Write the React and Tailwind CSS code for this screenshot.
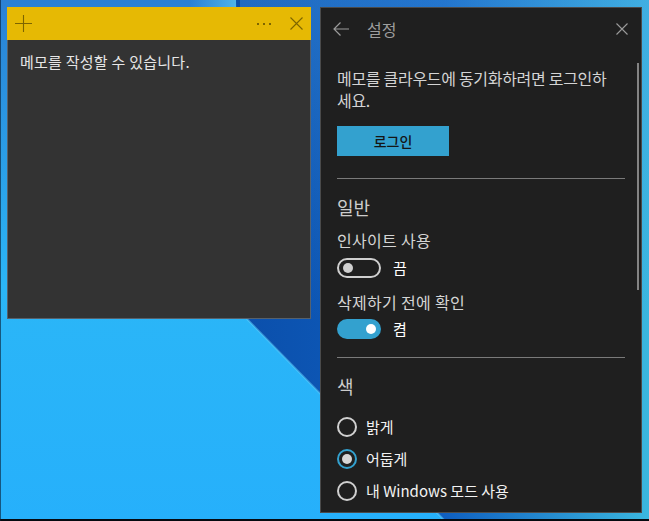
import React from "react";

function Wallpaper() {
  return (
    <svg className="absolute inset-0" width="649" height="521" viewBox="0 0 649 521">
      <defs>
        <linearGradient id="rightG" x1="240" y1="0" x2="649" y2="0" gradientUnits="userSpaceOnUse">
          <stop offset="0" stopColor="#0b4fab" />
          <stop offset="0.5" stopColor="#0f5fc0" />
          <stop offset="1" stopColor="#3bb7df" />
        </linearGradient>
        <linearGradient id="topHi" x1="0" y1="0" x2="0" y2="320" gradientUnits="userSpaceOnUse">
          <stop offset="0" stopColor="#4aa0e8" stopOpacity="0.35" />
          <stop offset="1" stopColor="#4aa0e8" stopOpacity="0" />
        </linearGradient>
        <linearGradient id="leftG" x1="0" y1="0" x2="0" y2="521" gradientUnits="userSpaceOnUse">
          <stop offset="0" stopColor="#2a80d4" />
          <stop offset="0.55" stopColor="#2bb6f7" />
          <stop offset="1" stopColor="#26b0fb" />
        </linearGradient>
        <linearGradient id="ray" x1="190" y1="0" x2="236" y2="0" gradientUnits="userSpaceOnUse">
          <stop offset="0" stopColor="#52b8ea" stopOpacity="0" />
          <stop offset="1" stopColor="#52b8ea" stopOpacity="0.9" />
        </linearGradient>
      </defs>
      <rect width="649" height="521" fill="url(#rightG)" />
      <rect x="240" width="409" height="521" fill="url(#topHi)" />
      <polygon points="0,0 236,0 247,319 445,521 0,521" fill="url(#leftG)" />
      <rect x="180" y="0" width="56" height="8" fill="url(#ray)" />
      <line x1="247" y1="319" x2="449" y2="525" stroke="#6ad8ff" strokeWidth="2" opacity="0.45" />
      <rect x="0" y="519" width="649" height="2" fill="#050a10" />
      <rect x="0" y="0" width="1" height="521" fill="#0a1a2e" opacity="0.6" />
    </svg>
  );
}

function Toggle({ on }) {
  if (on) {
    return (
      <div className="w-[44px] h-[20px] rounded-full bg-[#33a1cf] flex items-center justify-end pr-[5px]">
        <div className="w-[10px] h-[10px] rounded-full bg-white" />
      </div>
    );
  }
  return (
    <div className="w-[44px] h-[20px] rounded-full border-2 border-[#cfcfcf] flex items-center pl-[4px]">
      <div className="w-[10px] h-[10px] rounded-full bg-[#cfcfcf]" />
    </div>
  );
}

function Radio({ checked, label }) {
  return (
    <div className="flex items-center h-[20px]">
      {checked ? (
        <div className="w-[20px] h-[20px] rounded-full border-2 border-[#33a1cf] flex items-center justify-center">
          <div className="w-[10px] h-[10px] rounded-full bg-[#d6d6d6]" />
        </div>
      ) : (
        <div className="w-[20px] h-[20px] rounded-full border-2 border-[#d0d0d0]" />
      )}
      <span className="ml-[9px] text-[15px] leading-[20px] text-[#f2f2f2] whitespace-nowrap">{label}</span>
    </div>
  );
}

export default function App() {
  return (
    <div className="relative w-[649px] h-[521px] overflow-hidden font-['Noto_Sans_CJK_KR','Noto_Sans',sans-serif]">
      <Wallpaper />
      <div className="relative flex items-start gap-[9px] pl-[7px] pt-[7px]">
        {/* Sticky note */}
        <div className="w-[304px] h-[312px] flex flex-col">
          <div className="h-[33px] bg-[#e6b904] flex items-center pl-[8px] pr-[8px]">
            <svg width="17" height="17" viewBox="0 0 17 17">
              <path d="M8.5 0V17M0 8.5H17" stroke="#7d6500" strokeWidth="1.1" />
            </svg>
            <div className="flex-1" />
            <svg width="14" height="4" viewBox="0 0 14 4" className="mt-[1px]">
              <rect x="0" y="1" width="2" height="2" fill="#7d6500" />
              <rect x="6" y="1" width="2" height="2" fill="#7d6500" />
              <rect x="12" y="1" width="2" height="2" fill="#7d6500" />
            </svg>
            <svg width="13" height="13" viewBox="0 0 13 13" className="ml-[19px]">
              <path d="M0.5 0.5L12.5 12.5M12.5 0.5L0.5 12.5" stroke="#7d6500" strokeWidth="1.1" />
            </svg>
          </div>
          <div className="flex-1 bg-[#333333] border-x border-b border-[#56616c] pl-[12px] pt-[12px]">
            <p className="text-[15px] tracking-[0.25px] leading-[20px] text-[#e6e6e6] whitespace-nowrap">메모를 작성할 수 있습니다.</p>
          </div>
        </div>

        {/* Settings panel */}
        <div className="relative w-[322px] h-[506px] bg-[#1f1f1f] border border-[#4a4a4a] flex flex-col">
          <div className="h-[42px] flex items-center pl-[12px] pr-[13px]">
            <svg width="16" height="14" viewBox="0 0 16 14">
              <path d="M16 7H1M7.5 0.5L1 7L7.5 13.5" stroke="#9b9b9b" strokeWidth="1.2" fill="none" />
            </svg>
            <span className="ml-[18px] text-[16px] leading-[20px] text-[#9e9e9e]">설정</span>
            <div className="flex-1" />
            <svg width="12" height="12" viewBox="0 0 12 12">
              <path d="M0.5 0.5L11.5 11.5M11.5 0.5L0.5 11.5" stroke="#9b9b9b" strokeWidth="1.1" />
            </svg>
          </div>

          <div className="px-4 flex flex-col">
            <p className="mt-[17px] text-[16px] tracking-[-0.3px] leading-[22px] text-[#d4d4d4] whitespace-nowrap">
              메모를 클라우드에 동기화하려면 로그인하
              <br />
              세요.
            </p>
            <div className="mt-[15px] w-[112px] h-[30px] bg-[#33a1cf] flex items-center justify-center">
              <span className="text-[14px] font-medium text-[#151515]">로그인</span>
            </div>
            <div className="mt-[22px] h-px bg-[#7a7a7a]" />

            <h2 className="mt-[16px] text-[18px] leading-[24px] text-[#cccccc]">일반</h2>
            <p className="mt-[11px] text-[16px] tracking-[0.3px] leading-[21px] text-[#d4d4d4]">인사이트 사용</p>
            <div className="mt-[7px] flex items-center">
              <Toggle on={false} />
              <span className="ml-[12px] text-[15px] leading-[20px] text-white">끔</span>
            </div>
            <p className="mt-[14px] text-[16px] tracking-[0.3px] leading-[21px] text-[#d4d4d4]">삭제하기 전에 확인</p>
            <div className="mt-[6px] flex items-center">
              <Toggle on={true} />
              <span className="ml-[12px] text-[15px] leading-[20px] text-white">켬</span>
            </div>
            <div className="mt-[18px] h-px bg-[#7a7a7a]" />

            <h2 className="mt-[16px] text-[18px] leading-[24px] text-[#cccccc]">색</h2>
            <div className="mt-[19px] flex flex-col gap-[12px]">
              <Radio checked={false} label="밝게" />
              <Radio checked={true} label="어둡게" />
              <Radio checked={false} label="내 Windows 모드 사용" />
            </div>
          </div>

          <div className="absolute right-[2px] top-[55px] w-[2px] h-[227px] bg-[#838383]" />
        </div>
      </div>
    </div>
  );
}
